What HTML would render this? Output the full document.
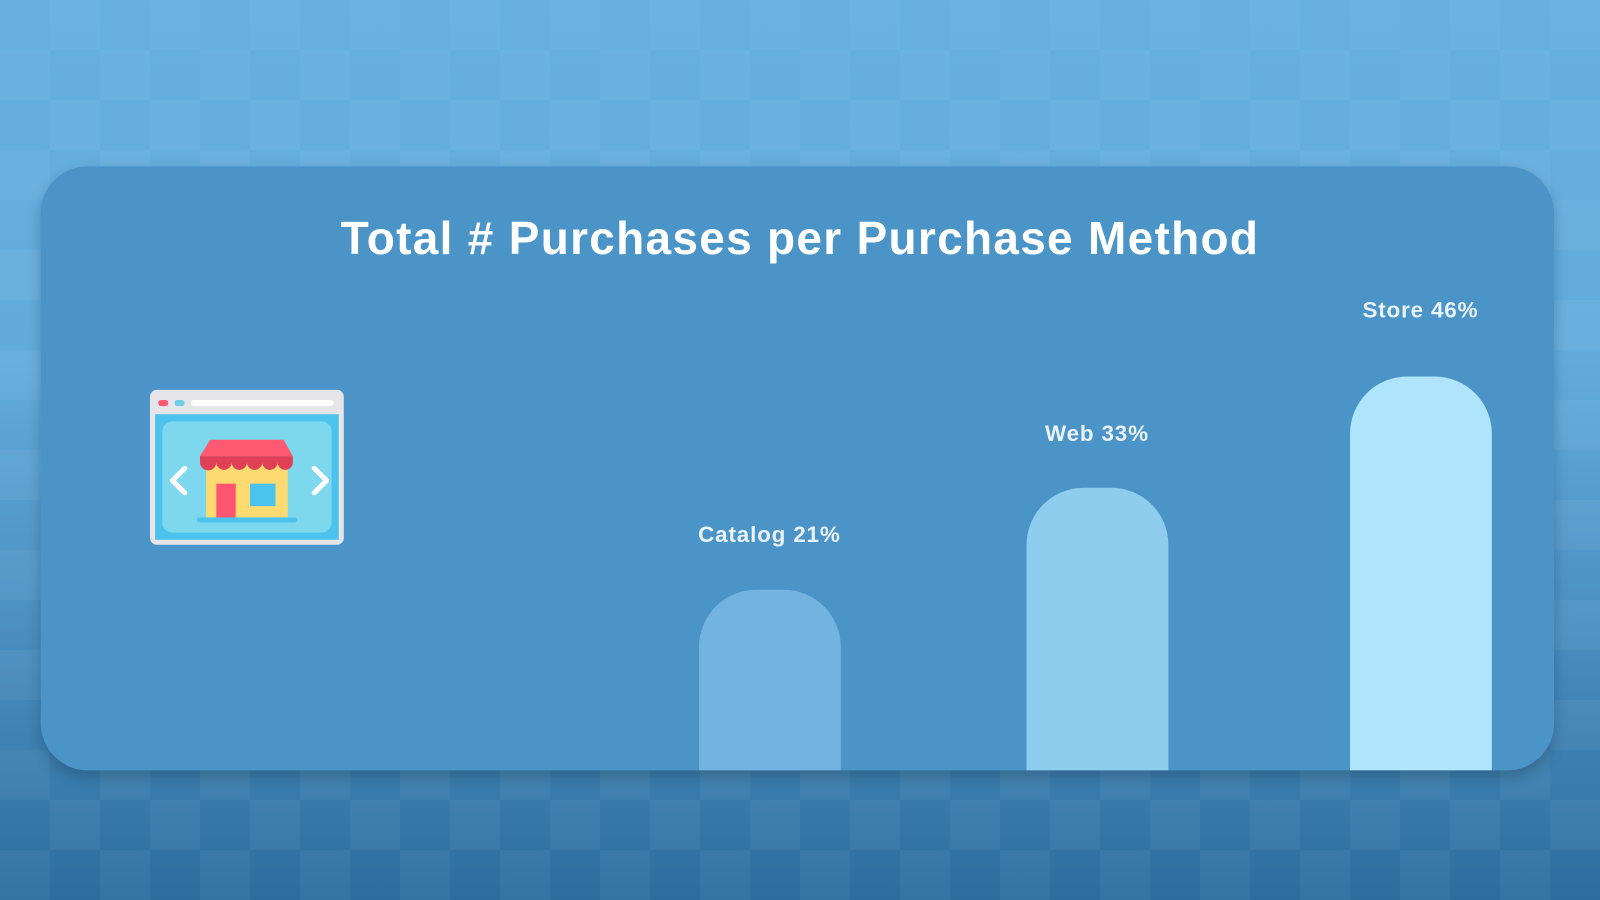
<!DOCTYPE html>
<html><head><style>
html,body{margin:0;padding:0;width:1600px;height:900px;overflow:hidden}
#w{position:absolute;left:0;top:0;width:1568px;height:882px;transform:scale(1.02041);transform-origin:0 0;
background:linear-gradient(180deg,#66b0e0 0%,#62acdc 40%,#4a8fc0 70%,#2c6d9e 100%);font-family:"Liberation Sans",sans-serif}
#chk{position:absolute;inset:0;background:conic-gradient(rgba(255,255,255,.045) 25%,transparent 0 50%,rgba(255,255,255,.045) 0 75%,transparent 0);background-size:98px 98px}
#card{position:absolute;left:40px;top:163px;width:1483px;height:592px;background:#4b94c8;border-radius:46px;overflow:hidden;box-shadow:0 6px 14px rgba(0,0,0,.2)}
h1{position:absolute;left:0;right:0;top:208px;margin:0;text-align:center;color:#fff;font-size:45px;font-weight:bold;letter-spacing:1.3px}
.bar{position:absolute;width:139px;border-radius:56px 56px 0 0;bottom:0}
.lbl{position:absolute;color:#eaf2fa;font-weight:bold;font-size:22px;letter-spacing:0.8px;text-align:center;width:220px}
</style></head><body><div id="w"><div id="chk"></div>
<div id="card">
<div class="bar" style="left:645px;top:415px;background:#72b3df"></div>
<div class="bar" style="left:966px;top:315px;background:#8fcdee"></div>
<div class="bar" style="left:1283px;top:206px;background:#aee4fc"></div>
</div>
<h1>Total # Purchases per Purchase Method</h1>
<div class="lbl" style="left:644px;top:511px">Catalog 21%</div>
<div class="lbl" style="left:965px;top:412px">Web 33%</div>
<div class="lbl" style="left:1282px;top:291px">Store 46%</div>
<svg style="position:absolute;left:147px;top:382px" width="190" height="152" viewBox="0 0 190 152">
<rect x="0" y="0" width="190" height="152" rx="7" fill="#e6e6ea"/>
<rect x="5" y="24" width="180" height="123" fill="#4cc3ef"/>
<rect x="12" y="31" width="166" height="109" rx="10" fill="#7dd8ee"/>
<rect x="8" y="10" width="10" height="6" rx="3" fill="#ff5a72"/>
<rect x="24" y="10" width="10" height="6" rx="3" fill="#6fcde8"/>
<rect x="40" y="10" width="140" height="6" rx="3" fill="#fff"/>
<path d="M34 77 L22 89 L34 101 M161 77 L173 89 L161 101" stroke="#fff" stroke-width="5" fill="none" stroke-linecap="round" stroke-linejoin="round"/>
<rect x="55" y="72" width="80" height="55" fill="#fddb70"/>
<rect x="65" y="92" width="19" height="35" fill="#ff5570"/>
<rect x="98" y="92" width="25" height="22" fill="#4cc3ef"/>
<path d="M59 49 L131 49 L140 65 L49 65 Z" fill="#ff5a72"/>
<path d="M49 65 h91 v6 a7 7 0 0 1 -15 0 a7 7 0 0 1 -15 0 a7 7 0 0 1 -15 0 a7 7 0 0 1 -15 0 a7 7 0 0 1 -15 0 a7 7 0 0 1 -16 0 Z" fill="#e04058"/>
<rect x="46" y="125" width="98" height="5" rx="2.5" fill="#4cc3ef"/>
</svg>
</div></body></html>
